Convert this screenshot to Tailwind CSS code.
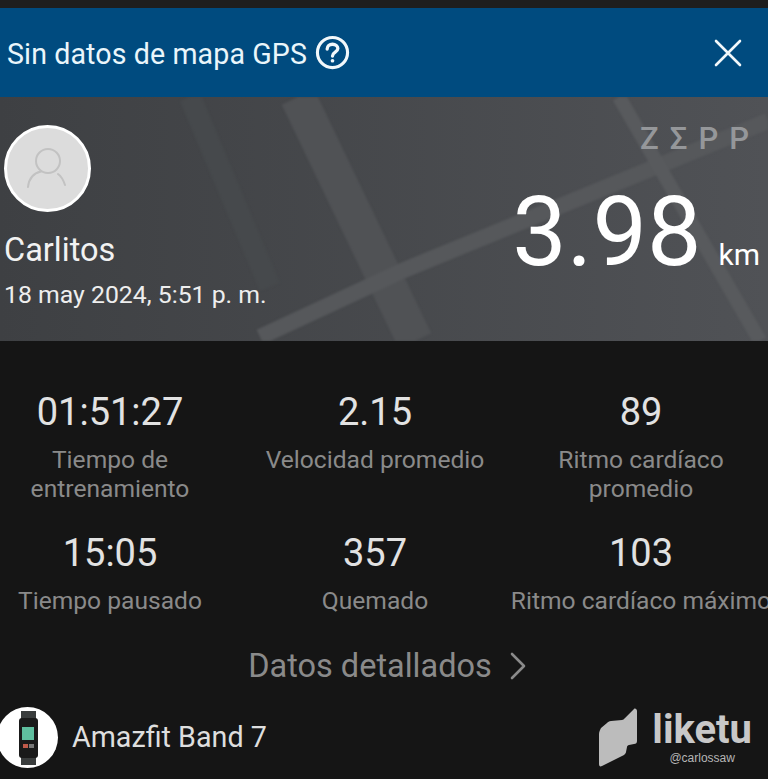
<!DOCTYPE html>
<html lang="en">
<head>
    <meta charset="UTF-8">
    <meta name="viewport" content="width=device-width, initial-scale=1.0">
    <title>Zepp</title>
    <script src="https://cdn.jsdelivr.net/npm/@tailwindcss/browser@4"></script>
</head>
<body class="bg-[#151515] font-['Roboto',sans-serif]">
<div class="w-[768px] h-[779px] overflow-hidden flex flex-col">

    <div class="h-2 bg-[#1e1e1e]"></div>

    <!-- GPS banner -->
    <div class="h-[89px] bg-[#004b7f] flex items-center justify-between pl-[7px] pr-[26px] text-[#eaf6fb]">
        <div class="flex items-center gap-[8px]">
            <span class="text-[28.6px] leading-[36px] pt-[2px] tracking-[0.1px]">Sin datos de mapa GPS</span>
            <svg class="w-[35px] h-[35px]" viewBox="0 0 36 36" fill="none" stroke="#f2f8fb" stroke-width="3.2">
                <circle cx="18" cy="18" r="15.5"/>
                <path d="M12.5 14.5c0-3.2 2.4-5 5.5-5s5.5 1.9 5.5 4.5c0 3.8-5.5 3.6-5.5 7.6" stroke-linecap="round" stroke-width="3.4"/>
                <circle cx="18" cy="26.5" r="1.9" fill="#f2f8fb" stroke="none"/>
            </svg>
        </div>
        <svg class="w-[28px] h-[28px]" viewBox="0 0 28 28" stroke="#f2f8fb" stroke-width="2.6" stroke-linecap="round">
            <path d="M2 2l24 24M26 2L2 26"/>
        </svg>
    </div>

    <!-- Summary with map background -->
    <div class="relative h-[244px] bg-gradient-to-r from-[#3e4043] to-[#505256] flex justify-between overflow-hidden">
        <svg class="absolute inset-0 w-full h-full blur-[1px]" viewBox="0 0 768 244" fill="none">
            <path d="M190 0L270 190" stroke="#46494c" stroke-width="22"/>
            <path d="M298 0L415 244" stroke="#505255" stroke-width="36"/>
            <path d="M768 24L404 173L260 240" stroke="#56585b" stroke-width="16"/>
            <path d="M619 0L760 244" stroke="#585a5d" stroke-width="14"/>
        </svg>

        <div class="relative pl-[4px] pt-[28px]">
            <div class="w-[87px] h-[87px] rounded-full bg-[#dcdcdc] border-[3px] border-white flex items-center justify-center">
                <svg class="w-[46px] h-[46px]" viewBox="0 0 46 46" fill="none" stroke="#c2c2c2" stroke-width="2">
                    <circle cx="23" cy="15" r="12"/>
                    <path d="M3 41C4 32 9 27 16 25.5M33 28c3 2 5 5 7 11" stroke-linecap="round"/>
                </svg>
            </div>
            <p class="text-[32.5px] leading-[36px] text-[#f2f2f2] mt-[20px]">Carlitos</p>
            <p class="text-[24.8px] leading-[30px] text-[#eeeeee] mt-[12px]">18 may 2024, 5:51 p. m.</p>
        </div>

        <div class="relative flex flex-col items-end pr-[8px] pt-[28px]">
            <span class="text-[31px] leading-[28px] font-medium tracking-[11px] text-[#95979a] mr-[-11px] pr-[11px]">ZΣPP</span>
            <div class="flex items-baseline gap-[17px] mt-[29px]">
                <span class="text-[97px] leading-[100px] text-white">3.98</span>
                <span class="text-[30px] leading-[36px] text-white">km</span>
            </div>
        </div>
    </div>

    <!-- Stats -->
    <div class="grid grid-cols-[220px_278px_254px] pt-[49px] text-center">
        <div class="h-[141px]">
            <p class="text-[38px] leading-[44px] text-[#e2e2e2]">01:51:27</p>
            <p class="text-[24.6px] leading-[29px] text-[#8a8a8a] mt-[11px]">Tiempo de<br>entrenamiento</p>
        </div>
        <div class="h-[141px] ml-[16px] w-[278px]">
            <p class="text-[38px] leading-[44px] text-[#e2e2e2]">2.15</p>
            <p class="text-[24.6px] leading-[29px] text-[#8a8a8a] mt-[11px]">Velocidad promedio</p>
        </div>
        <div class="h-[141px] ml-[16px] w-[254px]">
            <p class="text-[38px] leading-[44px] text-[#e2e2e2]">89</p>
            <p class="text-[24.6px] leading-[29px] text-[#8a8a8a] mt-[11px]">Ritmo cardíaco<br>promedio</p>
        </div>
        <div>
            <p class="text-[38px] leading-[44px] text-[#e2e2e2]">15:05</p>
            <p class="text-[24.6px] leading-[29px] text-[#8a8a8a] mt-[11px] whitespace-nowrap">Tiempo pausado</p>
        </div>
        <div class="ml-[16px] w-[278px]">
            <p class="text-[38px] leading-[44px] text-[#e2e2e2]">357</p>
            <p class="text-[24.6px] leading-[29px] text-[#8a8a8a] mt-[11px]">Quemado</p>
        </div>
        <div class="ml-[16px] w-[254px]">
            <p class="text-[38px] leading-[44px] text-[#e2e2e2]">103</p>
            <p class="text-[24.6px] leading-[29px] text-[#8a8a8a] mt-[11px] whitespace-nowrap flex justify-center">Ritmo cardíaco máximo</p>
        </div>
    </div>

    <!-- Details link -->
    <div class="flex items-center justify-center gap-[17px] mt-[31px] h-[40px] pl-[7px] text-[#8a8a8a]">
        <span class="text-[32.5px] leading-[40px]">Datos detallados</span>
        <svg class="w-[18px] h-[28px]" viewBox="0 0 18 28" fill="none" stroke="#8a8a8a" stroke-width="2.6" stroke-linecap="round" stroke-linejoin="round">
            <path d="M3 2l12 12L3 26"/>
        </svg>
    </div>

    <!-- Device and watermark -->
    <div class="flex items-center justify-between mt-[21px] pr-[16px]">
        <div class="flex items-center gap-[14px] ml-[-3px]">
            <div class="w-[61px] h-[61px] rounded-full bg-white flex items-center justify-center">
                <svg class="w-[30px] h-[56px]" viewBox="0 0 30 56">
                    <rect x="8" y="1" width="15" height="10" fill="#3a3d3d"/>
                    <rect x="8" y="45" width="15" height="10" fill="#3a3d3d"/>
                    <rect x="6" y="8" width="19" height="40" rx="3" fill="#1a1a1a"/>
                    <rect x="9" y="17" width="12" height="13" fill="#5fbf9f"/>
                    <rect x="10" y="34" width="5" height="4" fill="#c05a4a"/>
                    <rect x="16" y="34" width="5" height="4" fill="#777"/>
                </svg>
            </div>
            <span class="text-[28.7px] text-[#dedede]">Amazfit Band 7</span>
        </div>
        <div class="flex items-center gap-[15px]">
            <svg class="w-[38px] h-[59px]" viewBox="0 0 38 59" fill="#bcbcbc">
                <path d="M0 26c0-2 1-4 2-6l6-5c1-1 2-2 4-2l11-1c1 0 2-1 3-2L35 1c1-1 3 0 3 2v30c0 2-1 3-3 3l-5 1c-1 0-2 1-2 2l-1 5c0 1-1 2-2 3L3 58c-2 1-3 0-3-2z"/>
            </svg>
            <div class="flex flex-col items-center">
                <span class="text-[40px] leading-[38px] font-bold text-[#c8c8c8]">liketu</span>
                <span class="text-[12px] leading-[14px] text-[#b5b5b5] font-['Liberation_Sans',sans-serif] mt-[2px]">@carlossaw</span>
            </div>
        </div>
    </div>
</div>
</body>
</html>
